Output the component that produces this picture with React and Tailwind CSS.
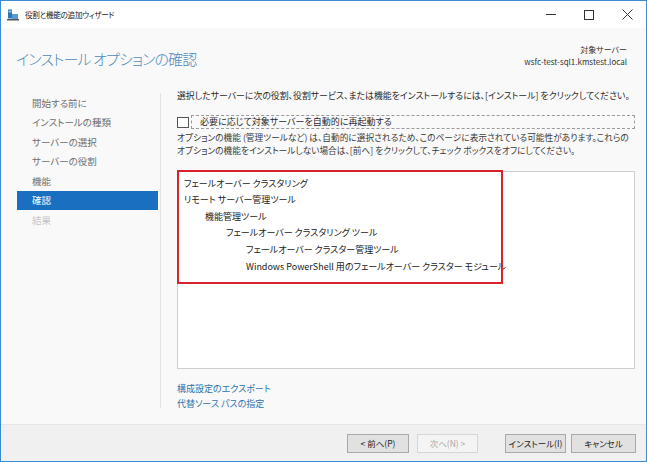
import React from 'react';

const jp = "font-['Segoe_UI','Noto_Sans_CJK_JP',sans-serif] [font-feature-settings:'palt']";

const NavItem = ({ label, active, disabled }) => (
  <div
    className={
      'h-[19.5px] pl-[15px] flex items-center text-[9.5px] ' +
      (active ? 'bg-[#1a6fc1] text-white' : disabled ? 'text-[#c4c4c4]' : 'text-[#6f6f6f]')
    }
  >
    {label}
  </div>
);

const Btn = ({ children, w, disabled }) => (
  <div
    className={
      'h-[19px] flex items-center justify-center text-[8.5px] border ' +
      w +
      (disabled
        ? ' bg-[#f4f4f4] border-[#d6d6d6] text-[#a8a8a8]'
        : ' bg-[#e1e1e1] border-[#a9a9a9] text-[#222]')
    }
  >
    {children}
  </div>
);

export default function App() {
  const features = [
    { t: 'フェールオーバー クラスタリング', i: 'pl-[6px]' },
    { t: 'リモート サーバー管理ツール', i: 'pl-[6px]' },
    { t: '機能管理ツール', i: 'pl-[27px]' },
    { t: 'フェールオーバー クラスタリング ツール', i: 'pl-[48px]' },
    { t: 'フェールオーバー クラスター管理ツール', i: 'pl-[68px]' },
    { t: 'Windows PowerShell 用のフェールオーバー クラスター モジュール', i: 'pl-[68px]' },
  ];

  return (
    <div className={'w-[647px] h-[462px] bg-white ' + jp}>
      <div className="w-full h-full border border-[#3d8bd3] flex flex-col">
        {/* title bar */}
        <div className="h-[27px] bg-white flex items-center shrink-0">
          <svg className="ml-[6px]" width="12" height="12" viewBox="0 0 12 12">
            <rect x="1" y="0.5" width="4" height="9" fill="#2f74b8" />
            <rect x="1.5" y="1.5" width="3" height="2" fill="#8fc0ea" />
            <rect x="5" y="5" width="6" height="5" fill="#5a9ad4" />
            <rect x="0" y="10" width="12" height="1.5" fill="#555" />
          </svg>
          <span className="ml-[6px] text-[7.6px] tracking-[-0.3px] text-[#1a1a1a]">役割と機能の追加ウィザード</span>
          <div className="ml-auto flex items-center h-full">
            <div className="w-[38px] flex justify-center">
              <div className="w-[10px] h-px bg-[#333]" />
            </div>
            <div className="w-[38px] flex justify-center">
              <div className="w-[10px] h-[10px] border border-[#333]" />
            </div>
            <div className="w-[38px] flex justify-center">
              <svg width="11" height="11" viewBox="0 0 11 11">
                <path d="M0.5 0.5 L10.5 10.5 M10.5 0.5 L0.5 10.5" stroke="#333" strokeWidth="1" />
              </svg>
            </div>
          </div>
        </div>

        {/* body */}
        <div className="flex-1 bg-[#f9f9f9] flex flex-col">
          {/* header */}
          <div className="h-[58px] flex items-start shrink-0">
            <div className="ml-[15px] mt-[20px] text-[15px] leading-[22px] tracking-[-0.9px] font-light text-[#4f8ab9]">
              インストール オプションの確認
            </div>
            <div className="ml-auto mr-[19px] mt-[16px] text-right text-[8px] leading-[12px] text-[#333]">
              <div>対象サーバー</div>
              <div>wsfc-test-sql1.kmstest.local</div>
            </div>
          </div>

          <div className="flex-1 flex">
            {/* nav */}
            <div className="w-[160px] shrink-0 pt-[7px] pl-[16px] pb-[16px]">
              <div className="h-full border-r border-[#e2e2e2] pr-[2px]">
                <NavItem label="開始する前に" />
                <NavItem label="インストールの種類" />
                <NavItem label="サーバーの選択" />
                <NavItem label="サーバーの役割" />
                <NavItem label="機能" />
                <NavItem label="確認" active />
                <NavItem label="結果" disabled />
              </div>
            </div>

            {/* content */}
            <div className="flex-1 pl-[16px] pr-[11px] pt-[3px] text-[#2a2a2a]">
              <div className="text-[8.9px] leading-[14px] whitespace-nowrap">
                選択したサーバーに次の役割、役割サービス、または機能をインストールするには、[インストール] をクリックしてください。
              </div>
              <div className="mt-[12px] flex items-center h-[14px]">
                <div className="w-[12px] h-[11px] border border-[#555] bg-white shrink-0" />
                <div className="ml-[2px] flex-1 h-[14px] border border-dashed border-[#9a9a9a] pl-[8px] flex items-center text-[9px]">
                  必要に応じて対象サーバーを自動的に再起動する
                </div>
              </div>
              <div className="mt-[2px] text-[8.7px] leading-[13px] text-[#3a3a3a]">
                オプションの機能 (管理ツールなど) は、自動的に選択されるため、このページに表示されている可能性があります。これらのオプションの機能をインストールしない場合は、[前へ] をクリックして、チェック ボックスをオフにしてください。
              </div>
              <div className="mt-[14px] relative h-[198px] bg-white border border-[#cfcfcf]">
                <div className="pt-[3px] text-[9px] text-[#222]">
                  {features.map((f, k) => (
                    <div key={k} className={'h-[16.6px] flex items-center ' + f.i}>
                      {f.t}
                    </div>
                  ))}
                </div>
                <div className="absolute left-[-1px] top-[-2px] w-[326px] h-[114px] border-2 border-[#d8232b]" />
              </div>
              <div className="mt-[13px] text-[9px] leading-[14.5px] text-[#2e73ae]">
                <div>構成設定のエクスポート</div>
                <div>代替ソース パスの指定</div>
              </div>
            </div>
          </div>

          {/* footer */}
          <div className="h-[37px] shrink-0 bg-[#f0f0f0] border-t border-[#e6e6e6] flex items-center pr-[10px]">
            <div className="ml-auto flex items-center">
              <Btn w="w-[62px]">&lt; 前へ(P)</Btn>
              <div className="w-[8px]" />
              <Btn w="w-[61px]" disabled>次へ(N) &gt;</Btn>
              <div className="w-[27px]" />
              <Btn w="w-[61px]">インストール(I)</Btn>
              <div className="w-[5px]" />
              <Btn w="w-[65px]">キャンセル</Btn>
            </div>
          </div>
        </div>
      </div>
    </div>
  );
}
